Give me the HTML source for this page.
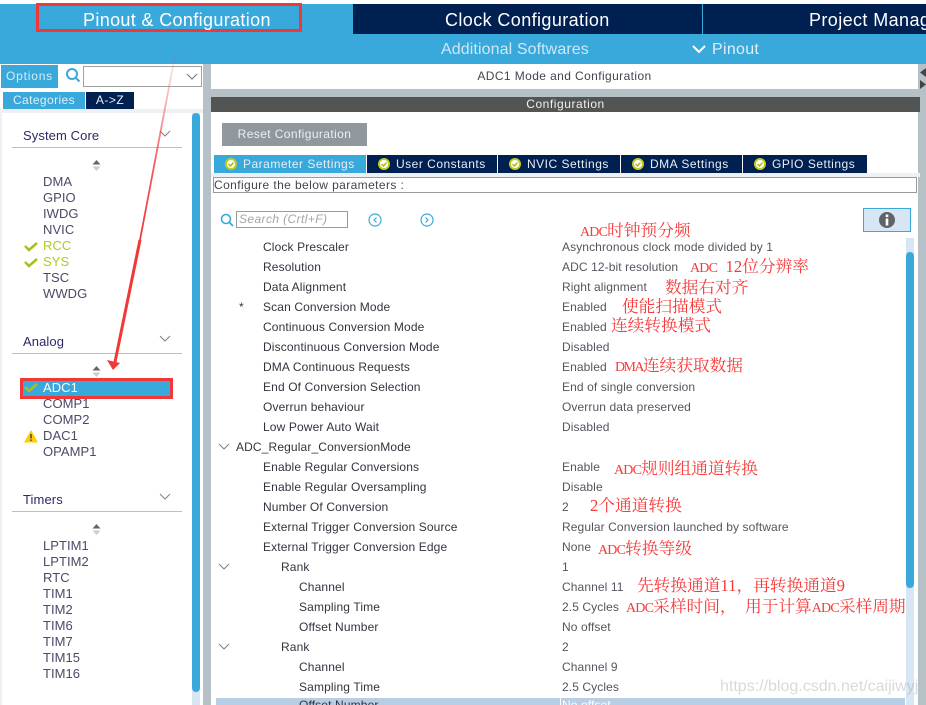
<!DOCTYPE html>
<html><head><meta charset="utf-8"><style>
html,body{margin:0;padding:0;width:926px;height:705px;overflow:hidden;background:#fff}
body{position:relative;font-family:"Liberation Sans",sans-serif;font-size:12px;color:#3f3f52}
div{position:absolute;white-space:nowrap}
.r{height:14px;line-height:14px;letter-spacing:.13px;color:#33333f}
.v{left:562px;height:14px;line-height:14px;letter-spacing:.1px;color:#55555f}
.m{height:16px;line-height:16px;left:43px;font-size:13px;letter-spacing:.05px;color:#4a4a66}
.n{font-family:"Liberation Serif","Noto Serif CJK SC",serif;color:#f63a3a;font-size:16.7px;line-height:18px;height:18px}
.n i{font-style:normal;font-size:14px;letter-spacing:-.8px}
.h{font-size:13px;left:23px;color:#2a2a66;letter-spacing:.1px;line-height:16px}
.t{top:155px;height:18px;line-height:18px;background:#002052;color:#e8eef5;letter-spacing:.5px}
.t svg{position:absolute;left:11px;top:3px}
.t span{position:absolute;left:29px;top:0}
.l{left:12px;width:170px;height:1px;background:#b5c1c7}
</style></head><body>
<div style="left:0;top:4px;width:926px;height:60px;background:#39a9dc"></div>
<div style="left:353px;top:4px;width:349px;height:30px;background:#002052"></div>
<div style="left:703px;top:4px;width:223px;height:30px;background:#002052"></div>
<div style="left:36px;top:3px;width:260px;height:23px;border:3px solid #f33636"></div>
<div style="left:83px;top:8px;font-size:18px;line-height:24px;color:#fff;letter-spacing:.35px">Pinout &amp; Configuration</div>
<div style="left:445px;top:8px;font-size:18px;line-height:24px;color:#fff;letter-spacing:.4px">Clock Configuration</div>
<div style="left:809px;top:8px;font-size:18px;line-height:24px;color:#fff;letter-spacing:.4px">Project Manager</div>
<div style="left:441px;top:40px;font-size:16px;line-height:20px;color:#cfe6f5;letter-spacing:.1px">Additional Softwares</div>
<svg style="position:absolute;left:691px;top:44px" width="16" height="12"><path d="M2 2l6 6 6-6" fill="none" stroke="#fff" stroke-width="2"/></svg>
<div style="left:712px;top:40px;font-size:16px;line-height:20px;color:#dfeef8;letter-spacing:.3px">Pinout</div>

<!-- left panel -->
<div style="left:0;top:64px;width:203px;height:641px;background:#fff"></div>
<div style="left:0;top:109px;width:203px;height:4px;background:#edf0f5"></div>
<div style="left:0;top:109px;width:2px;height:596px;background:#edf0f5"></div>
<div style="left:203px;top:64px;width:8px;height:641px;background:#b5c1c7"></div>
<div style="left:1px;top:65px;width:57px;height:23px;background:#39a9dc;color:#d5ecf8;line-height:23px;text-align:center;letter-spacing:.8px">Options</div>
<svg style="position:absolute;left:65px;top:67px" width="16" height="17"><circle cx="7" cy="7" r="5" fill="none" stroke="#39a9dc" stroke-width="2"/><path d="M10.5 10.5l4 4" stroke="#39a9dc" stroke-width="2"/></svg>
<div style="left:83px;top:66px;width:117px;height:19px;border:1px solid #a0a0a0;background:#fff"></div>
<svg style="position:absolute;left:186px;top:73px" width="12" height="8"><path d="M1 1l5 5 5-5" fill="none" stroke="#707070" stroke-width="1"/></svg>
<div style="left:3px;top:92px;width:82px;height:17px;background:#39a9dc;color:#dceff9;line-height:17px;text-align:center;letter-spacing:.4px">Categories</div>
<div style="left:86px;top:92px;width:48px;height:17px;background:#002052;color:#e8eef5;line-height:17px;text-align:center;letter-spacing:.5px">A-&gt;Z</div>

<div class="h" style="top:128px">System Core</div>
<svg style="position:absolute;left:159px;top:130px" width="12" height="8"><path d="M1 1l5 5 5-5" fill="none" stroke="#808080"/></svg>
<div class="l" style="top:147px"></div>
<svg style="position:absolute;left:92px;top:160px" width="9" height="12"><path d="M4.500 0L8.500 4.500H.5z" fill="#666"/><path d="M.5 6.500H8.500L4.500 11z" fill="#ccc"/></svg>
<div class="m" style="top:174px">DMA</div>
<div class="m" style="top:190px">GPIO</div>
<div class="m" style="top:206px">IWDG</div>
<div class="m" style="top:222px">NVIC</div>
<div class="m" style="top:238px;color:#b5c722">RCC</div>
<div class="m" style="top:254px;color:#b5c722">SYS</div>
<div class="m" style="top:270px">TSC</div>
<div class="m" style="top:286px">WWDG</div>
<svg style="position:absolute;left:24px;top:240px" width="14" height="30"><path d="M1 6l4 4 8-7" fill="none" stroke="#a9c01c" stroke-width="2.500"/><path d="M1 22l4 4 8-7" fill="none" stroke="#a9c01c" stroke-width="2.500"/></svg>

<div class="h" style="top:334px">Analog</div>
<svg style="position:absolute;left:159px;top:335px" width="12" height="8"><path d="M1 1l5 5 5-5" fill="none" stroke="#808080"/></svg>
<div class="l" style="top:353px"></div>
<svg style="position:absolute;left:92px;top:366px" width="9" height="12"><path d="M4.500 0L8.500 4.500H.5z" fill="#666"/><path d="M.5 6.500H8.500L4.500 11z" fill="#ccc"/></svg>
<div style="left:20px;top:378px;width:147px;height:15px;background:#39a9dc;border:3px solid #f33636"></div>
<svg style="position:absolute;left:24px;top:382px" width="14" height="14"><path d="M1 5l4 4 8-7" fill="none" stroke="#a9c01c" stroke-width="2.500"/></svg>
<div class="m" style="top:380px;color:#fff">ADC1</div>
<div class="m" style="top:396px">COMP1</div>
<div class="m" style="top:412px">COMP2</div>
<div class="m" style="top:428px">DAC1</div>
<div class="m" style="top:444px">OPAMP1</div>
<svg style="position:absolute;left:24px;top:430px" width="14" height="13"><path d="M7 0L14 12.500H0z" fill="#fc0"/><path d="M7 4v4.500M7 9.500v1.500" stroke="#444" stroke-width="1.500"/></svg>

<div class="h" style="top:492px">Timers</div>
<svg style="position:absolute;left:159px;top:493px" width="12" height="8"><path d="M1 1l5 5 5-5" fill="none" stroke="#808080"/></svg>
<div class="l" style="top:511px"></div>
<svg style="position:absolute;left:92px;top:524px" width="9" height="12"><path d="M4.500 0L8.500 4.500H.5z" fill="#666"/><path d="M.5 6.500H8.500L4.500 11z" fill="#ccc"/></svg>
<div class="m" style="top:538px">LPTIM1</div>
<div class="m" style="top:554px">LPTIM2</div>
<div class="m" style="top:570px">RTC</div>
<div class="m" style="top:586px">TIM1</div>
<div class="m" style="top:602px">TIM2</div>
<div class="m" style="top:618px">TIM6</div>
<div class="m" style="top:634px">TIM7</div>
<div class="m" style="top:650px">TIM15</div>
<div class="m" style="top:666px">TIM16</div>
<div style="left:192px;top:113px;width:8px;height:592px;background:#d6e6f4"></div>
<div style="left:192px;top:113px;width:8px;height:579px;background:#39a9dc;border-radius:4px"></div>

<!-- right -->
<div style="left:211px;top:64px;height:25px;background:#fff;color:#44444f;text-align:center;line-height:25px;letter-spacing:.4px;width:707px">ADC1 Mode and Configuration</div>
<div style="left:211px;top:89px;width:715px;height:8px;background:#b5c1c7"></div>
<div style="left:918px;top:64px;width:8px;height:641px;background:#b5c1c7"></div>
<svg style="position:absolute;left:920px;top:68px" width="6" height="22"><path d="M6 0v9L0 4.500z" fill="#444"/><path d="M0 12l6 4.500L0 21z" fill="#444"/></svg>
<div style="left:211px;top:97px;width:709px;height:15px;background:#525554;color:#f0f0f0;text-align:center;line-height:15px;letter-spacing:.55px">Configuration</div>
<div style="left:920px;top:97px;width:6px;height:608px;background:#b5c1c7"></div>
<div style="left:222px;top:123px;width:145px;height:23px;background:#90979d;color:#eef0f2;text-align:center;line-height:23px;letter-spacing:.4px">Reset Configuration</div>

<div style="left:211px;top:173px;width:709px;height:4px;background:#edf0f5"></div>
<div class="t" style="left:214px;width:152px;background:#39a9dc"><svg width="12" height="12"><circle cx="6" cy="6" r="5" fill="#fff" stroke="#c3cc1e" stroke-width="2"/><path d="M3.500 6l2 2 3-3.500" fill="none" stroke="#a9b81a" stroke-width="1.500"/></svg><span>Parameter Settings</span></div>
<div class="t" style="left:367px;width:130px"><svg width="12" height="12"><circle cx="6" cy="6" r="5" fill="#fff" stroke="#c3cc1e" stroke-width="2"/><path d="M3.500 6l2 2 3-3.500" fill="none" stroke="#a9b81a" stroke-width="1.500"/></svg><span>User Constants</span></div>
<div class="t" style="left:498px;width:122px"><svg width="12" height="12"><circle cx="6" cy="6" r="5" fill="#fff" stroke="#c3cc1e" stroke-width="2"/><path d="M3.500 6l2 2 3-3.500" fill="none" stroke="#a9b81a" stroke-width="1.500"/></svg><span>NVIC Settings</span></div>
<div class="t" style="left:621px;width:121px"><svg width="12" height="12"><circle cx="6" cy="6" r="5" fill="#fff" stroke="#c3cc1e" stroke-width="2"/><path d="M3.500 6l2 2 3-3.500" fill="none" stroke="#a9b81a" stroke-width="1.500"/></svg><span>DMA Settings</span></div>
<div class="t" style="left:743px;width:124px"><svg width="12" height="12"><circle cx="6" cy="6" r="5" fill="#fff" stroke="#c3cc1e" stroke-width="2"/><path d="M3.500 6l2 2 3-3.500" fill="none" stroke="#a9b81a" stroke-width="1.500"/></svg><span>GPIO Settings</span></div>
<div style="left:213px;top:177px;width:702px;height:14px;border:1px solid #9a9a9a;line-height:15px;letter-spacing:.4px;color:#44444f;background:#fff">Configure the below parameters :</div>

<svg style="position:absolute;left:220px;top:213px" width="14" height="15"><circle cx="6" cy="6" r="4.500" fill="none" stroke="#39a9dc" stroke-width="1.600"/><path d="M9 9l4 4" stroke="#39a9dc" stroke-width="1.800"/></svg>
<div style="left:236px;top:211px;height:15px;border:1px solid #9a9a9a;color:#a5a5a5;font-style:italic;line-height:15px;padding-left:2px;width:108px;letter-spacing:.4px">Search (Crtl+F)</div>
<svg style="position:absolute;left:368px;top:213px" width="14" height="14"><circle cx="7" cy="7" r="6" fill="none" stroke="#39a9dc" stroke-width="1.200"/><path d="M8.500 4.500L6 7l2.500 2.500" fill="none" stroke="#39a9dc" stroke-width="1.200"/></svg>
<svg style="position:absolute;left:420px;top:213px" width="14" height="14"><circle cx="7" cy="7" r="6" fill="none" stroke="#39a9dc" stroke-width="1.200"/><path d="M5.500 4.500L8 7l-2.500 2.500" fill="none" stroke="#39a9dc" stroke-width="1.200"/></svg>
<div style="left:863px;top:208px;width:46px;height:22px;background:#d6e6f4;border:1px solid #39a9dc"></div>
<svg style="position:absolute;left:879px;top:212px" width="16" height="16"><circle cx="8" cy="8" r="8" fill="#5f6468"/><rect x="6.700" y="2.500" width="2.600" height="2.600" fill="#fff"/><rect x="6.700" y="6.500" width="2.600" height="7" fill="#fff"/></svg>

<div style="left:906px;top:238px;width:8px;height:467px;background:#d6e6f4"></div>
<div style="left:906px;top:252px;width:8px;height:336px;background:#39a9dc;border-radius:4px"></div>

<div class="r" style="left:263px;top:240px">Clock Prescaler</div><div class="v" style="top:240px">Asynchronous clock mode divided by 1</div>
<div class="r" style="left:263px;top:260px">Resolution</div><div class="v" style="top:260px">ADC 12-bit resolution</div>
<div class="r" style="left:263px;top:280px">Data Alignment</div><div class="v" style="top:280px">Right alignment</div>
<div class="r" style="left:239px;top:300px">*</div>
<div class="r" style="left:263px;top:300px">Scan Conversion Mode</div><div class="v" style="top:300px">Enabled</div>
<div class="r" style="left:263px;top:320px">Continuous Conversion Mode</div><div class="v" style="top:320px">Enabled</div>
<div class="r" style="left:263px;top:340px">Discontinuous Conversion Mode</div><div class="v" style="top:340px">Disabled</div>
<div class="r" style="left:263px;top:360px">DMA Continuous Requests</div><div class="v" style="top:360px">Enabled</div>
<div class="r" style="left:263px;top:380px">End Of Conversion Selection</div><div class="v" style="top:380px">End of single conversion</div>
<div class="r" style="left:263px;top:400px">Overrun behaviour</div><div class="v" style="top:400px">Overrun data preserved</div>
<div class="r" style="left:263px;top:420px">Low Power Auto Wait</div><div class="v" style="top:420px">Disabled</div>
<div class="r" style="left:236px;top:440px">ADC_Regular_ConversionMode</div>
<div class="r" style="left:263px;top:460px">Enable Regular Conversions</div><div class="v" style="top:460px">Enable</div>
<div class="r" style="left:263px;top:480px">Enable Regular Oversampling</div><div class="v" style="top:480px">Disable</div>
<div class="r" style="left:263px;top:500px">Number Of Conversion</div><div class="v" style="top:500px">2</div>
<div class="r" style="left:263px;top:520px">External Trigger Conversion Source</div><div class="v" style="top:520px">Regular Conversion launched by software</div>
<div class="r" style="left:263px;top:540px">External Trigger Conversion Edge</div><div class="v" style="top:540px">None</div>
<div class="r" style="left:281px;top:560px">Rank</div><div class="v" style="top:560px">1</div>
<div class="r" style="left:299px;top:580px">Channel</div><div class="v" style="top:580px">Channel 11</div>
<div class="r" style="left:299px;top:600px">Sampling Time</div><div class="v" style="top:600px">2.5 Cycles</div>
<div class="r" style="left:299px;top:620px">Offset Number</div><div class="v" style="top:620px">No offset</div>
<div class="r" style="left:281px;top:640px">Rank</div><div class="v" style="top:640px">2</div>
<div class="r" style="left:299px;top:660px">Channel</div><div class="v" style="top:660px">Channel 9</div>
<div class="r" style="left:299px;top:680px">Sampling Time</div><div class="v" style="top:680px">2.5 Cycles</div>
<div style="left:216px;top:698px;width:689px;height:7px;background:#b8cee4;overflow:hidden"><div class="r" style="left:83px;top:0">Offset Number</div><div style="left:344px;top:0;width:1px;height:7px;background:#fff"></div><div class="v" style="left:346px;top:0;color:#fff">No offset</div></div>
<svg style="position:absolute;left:218px;top:443px" width="12" height="8"><path d="M1 1l5 5 5-5" fill="none" stroke="#808080"/></svg>
<svg style="position:absolute;left:218px;top:563px" width="12" height="8"><path d="M1 1l5 5 5-5" fill="none" stroke="#808080"/></svg>
<svg style="position:absolute;left:218px;top:643px" width="12" height="8"><path d="M1 1l5 5 5-5" fill="none" stroke="#808080"/></svg>

<!-- annotations -->
<div class="n" style="left:580px;top:222px"><i>ADC</i>时钟预分频</div>
<div class="n" style="left:690px;top:258px"><i>ADC</i>&nbsp;&nbsp;12位分辨率</div>
<div class="n" style="left:665px;top:279px">数据右对齐</div>
<div class="n" style="left:622px;top:298px">使能扫描模式</div>
<div class="n" style="left:611px;top:317px">连续转换模式</div>
<div class="n" style="left:615px;top:357px"><i style="letter-spacing:-1.6px">DMA</i>连续获取数据</div>
<div class="n" style="left:614px;top:460px"><i>ADC</i>规则组通道转换</div>
<div class="n" style="left:590px;top:497px">2个通道转换</div>
<div class="n" style="left:598px;top:540px"><i>ADC</i>转换等级</div>
<div class="n" style="left:637px;top:577px">先转换通道11，再转换通道9</div>
<div class="n" style="left:626px;top:598px"><i>ADC</i>采样时间，&nbsp;&nbsp;用于计算<i>ADC</i>采样周期</div>
<div style="left:720px;top:677px;font-size:16px;line-height:20px;color:rgba(170,170,170,.45)">https://blog.csdn.net/caijiwyj</div>

<svg style="position:absolute;left:0;top:0" width="926" height="705">
<defs><linearGradient id="g" gradientUnits="userSpaceOnUse" x1="177" y1="45" x2="140" y2="240"><stop offset="0" stop-color="#f33636" stop-opacity="0"/><stop offset=".6" stop-color="#f33636" stop-opacity=".8"/><stop offset="1" stop-color="#f33636"/></linearGradient></defs>
<path d="M177 45L140 240" stroke="url(#g)" stroke-width="1.800" fill="none"/>
<path d="M140 240L115 362" stroke="#f33636" stroke-width="3" fill="none"/>
<path d="M107 360L120 363 113 370z" fill="#f33636"/>
</svg>
</body></html>
